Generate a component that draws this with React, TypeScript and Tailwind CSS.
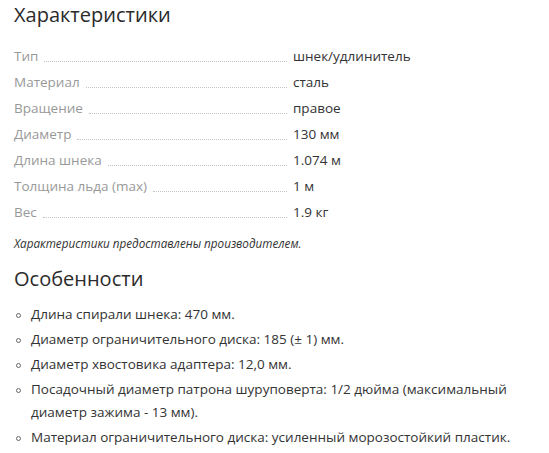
import React from 'react';

const specs: [string, string][] = [
  ['Тип', 'шнек/удлинитель'],
  ['Материал', 'сталь'],
  ['Вращение', 'правое'],
  ['Диаметр', '130 мм'],
  ['Длина шнека', '1.074 м'],
  ['Толщина льда (max)', '1 м'],
  ['Вес', '1.9 кг'],
];

const features = [
  'Длина спирали шнека: 470 мм.',
  'Диаметр ограничительного диска: 185 (± 1) мм.',
  'Диаметр хвостовика адаптера: 12,0 мм.',
  'Посадочный диаметр патрона шуруповерта: 1/2 дюйма (максимальный диаметр зажима - 13 мм).',
  'Материал ограничительного диска: усиленный морозостойкий пластик.',
];

const App: React.FC = () => {
  return (
    <div className="w-[549px] h-[453px] bg-white overflow-hidden pl-[14px] pr-[10px] text-[#333]" style={{ fontFamily: '"Open Sans", sans-serif' }}>
      {/* Характеристики */}
      <h2 className="pt-[1px] text-[20px] leading-[28px] font-normal text-[#2b2b2b]">Характеристики</h2>
      <div className="mt-[14px]">
        {specs.map(([k, v]) => (
          <div key={k} className="flex h-[26px] text-[13.5px] leading-[26px]">
            <div className="w-[279px] flex pr-[6px]">
              <span className="text-[#999] pr-[6px]">{k}</span>
              <span className="flex-1 self-end border-b border-dotted border-[#c4c4c4] mb-[7px]" />
            </div>
            <span>{v}</span>
          </div>
        ))}
      </div>
      <p className="mt-[10px] text-[11.7px] italic leading-[16px] text-[#333]">Характеристики предоставлены производителем.</p>

      {/* Особенности */}
      <h2 className="mt-[14px] text-[20px] leading-[28px] font-normal text-[#2b2b2b]">Особенности</h2>
      <ul className="mt-[10px] text-[13.5px] leading-[23px]">
        {features.map((f) => (
          <li key={f} className="flex items-start mb-[2px]">
            <span className="w-[17px] shrink-0 flex pt-[10px] pl-[2px]">
              <span className="w-[5px] h-[5px] rounded-full border border-[#666]" />
            </span>
            <span>{f}</span>
          </li>
        ))}
      </ul>
    </div>
  );
};

export default App;
